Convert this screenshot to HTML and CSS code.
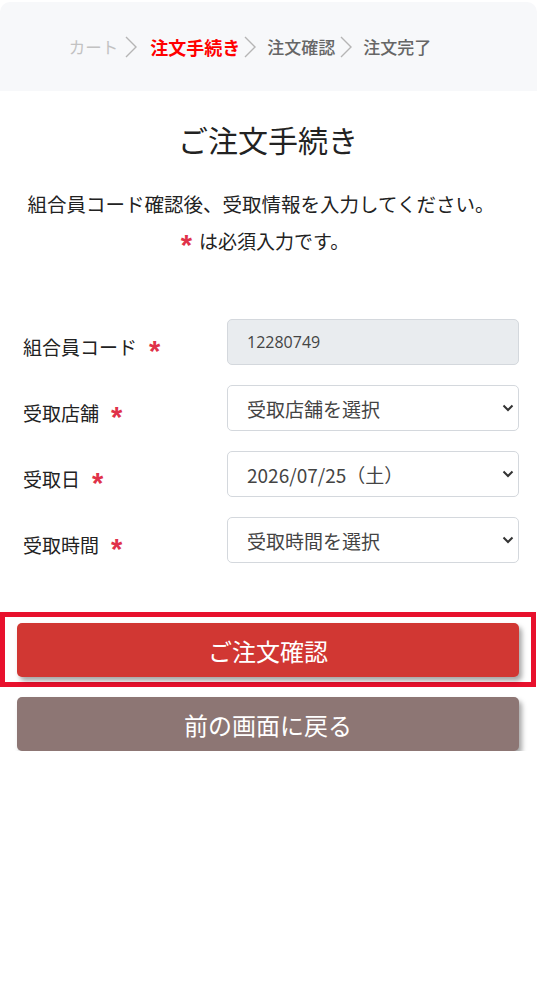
FILE: index.html
```html
<!DOCTYPE html>
<html lang="ja">
<head>
<meta charset="utf-8">
<title>ご注文手続き</title>
<link rel="stylesheet" href="styles.css">
</head>
<body>
<div class="page">
  <header class="steps">
    <span class="step done">カート</span>
    <svg class="chev" width="12" height="22" viewBox="0 0 12 22"><polyline points="1,1 11,11 1,21" fill="none" stroke="#b5b5b5" stroke-width="1.4"/></svg>
    <span class="step current">注文手続き</span>
    <svg class="chev" width="12" height="22" viewBox="0 0 12 22"><polyline points="1,1 11,11 1,21" fill="none" stroke="#b5b5b5" stroke-width="1.4"/></svg>
    <span class="step">注文確認</span>
    <svg class="chev" width="12" height="22" viewBox="0 0 12 22"><polyline points="1,1 11,11 1,21" fill="none" stroke="#b5b5b5" stroke-width="1.4"/></svg>
    <span class="step">注文完了</span>
  </header>

  <main class="content">
    <h1 class="title">ご注文手続き</h1>
    <div class="intro">
      <p class="intro-line first">組合員コード確認後、受取情報を入力してください。</p>
      <p class="intro-line second"><span class="req">*</span>は必須入力です。</p>
    </div>

    <form class="form">
      <div class="row">
        <label class="label">組合員コード<span class="req">*</span></label>
        <div class="field readonly">12280749</div>
      </div>
      <div class="row">
        <label class="label">受取店舗<span class="req">*</span></label>
        <div class="field select">
          <span>受取店舗を選択</span>
          <svg class="caret" width="12" height="8" viewBox="0 0 12 8"><polyline points="1.5,1.5 6,6 10.5,1.5" fill="none" stroke="#333" stroke-width="2"/></svg>
        </div>
      </div>
      <div class="row">
        <label class="label">受取日<span class="req">*</span></label>
        <div class="field select">
          <span>2026/07/25（土）</span>
          <svg class="caret" width="12" height="8" viewBox="0 0 12 8"><polyline points="1.5,1.5 6,6 10.5,1.5" fill="none" stroke="#333" stroke-width="2"/></svg>
        </div>
      </div>
      <div class="row">
        <label class="label">受取時間<span class="req">*</span></label>
        <div class="field select">
          <span>受取時間を選択</span>
          <svg class="caret" width="12" height="8" viewBox="0 0 12 8"><polyline points="1.5,1.5 6,6 10.5,1.5" fill="none" stroke="#333" stroke-width="2"/></svg>
        </div>
      </div>
    </form>

    <div class="actions">
      <div class="highlight">
        <button type="button" class="btn btn-primary">ご注文確認</button>
      </div>
      <button type="button" class="btn btn-back">前の画面に戻る</button>
    </div>
  </main>
</div>
</body>
</html>
```

FILE: styles.css
```css
* { box-sizing: border-box; }
html, body { margin: 0; padding: 0; background: #ffffff; }
body {
  font-family: "Noto Sans CJK JP", "Noto Sans", sans-serif;
  color: #222;
}
.page { width: 537px; }

.steps {
  height: 89px;
  margin-top: 2px;
  background: #f7f8fa;
  border-radius: 10px 10px 0 0;
  display: flex;
  align-items: center;
  justify-content: center;
  padding-right: 32px;
  font-size: 17px;
}
.step { color: #666; font-weight: 500; font-size: 17px; padding: 0 5px 0 11px; }
.step.done { color: #c2c2c2; font-weight: 400; font-size: 16.5px; padding-left: 0; padding-right: 7px; }
.step.current { color: #ff0000; font-weight: 700; font-size: 18px; padding-left: 13px; padding-right: 4px; }
.chev { display: block; }

.content { padding: 0 18px 0 17px; }

.title {
  margin: 29px 0 0;
  text-align: center;
  font-size: 30px;
  font-weight: 400;
  line-height: 38px;
  color: #222;
}
.intro { margin-top: 27px; }
.intro-line {
  margin: 0;
  text-align: center;
  font-size: 19px;
  line-height: 37px;
  color: #222;
}
.intro-line.first { padding-right: 14px; font-size: 19.5px; }
.intro-line.second { padding-right: 6px; }
.req {
  color: #e0324a;
  font-family: "Liberation Sans", sans-serif;
  font-weight: 700;
  font-size: 29px;
  line-height: 0;
  position: relative;
  top: 6px;
  margin: 0 7px 0 12px;
}
.intro-line .req { margin-left: 0; }

.form {
  margin-top: 60px;
  display: flex;
  flex-direction: column;
  gap: 20px;
}
.row {
  display: grid;
  grid-template-columns: 210px 1fr;
  align-items: center;
}
.label {
  padding-left: 6px;
  padding-top: 10px;
  font-size: 19px;
  line-height: 28px;
  color: #222;
}
.field {
  height: 46px;
  border: 1px solid #d4d8dd;
  border-radius: 5px;
  padding: 0 0 0 19px;
  display: flex;
  align-items: center;
  font-size: 19px;
  color: #444;
}
.field.readonly {
  background: #e9ecef;
  font-family: "Open Sans", sans-serif;
  font-size: 16px;
  color: #444;
}
.field.select { justify-content: space-between; padding-right: 4px; background: #fff; }
.caret { display: block; }

.actions { margin-top: 49px; }
.highlight {
  margin: 0 -18px 0 -17px;
  width: 536px;
  border: 5px solid #e8112d;
  padding: 6px 11px 5px 12px;
}
.btn {
  display: block;
  width: 502px;
  height: 54px;
  border: none;
  border-radius: 5px;
  color: #fff;
  font-family: "Noto Sans CJK JP", sans-serif;
  font-size: 24px;
  box-shadow: 3px 4px 5px rgba(0, 0, 0, 0.35);
  cursor: pointer;
}
.btn-primary { background: #d13733; }
.btn-back { background: #8d7674; margin-top: 10px; }
```
